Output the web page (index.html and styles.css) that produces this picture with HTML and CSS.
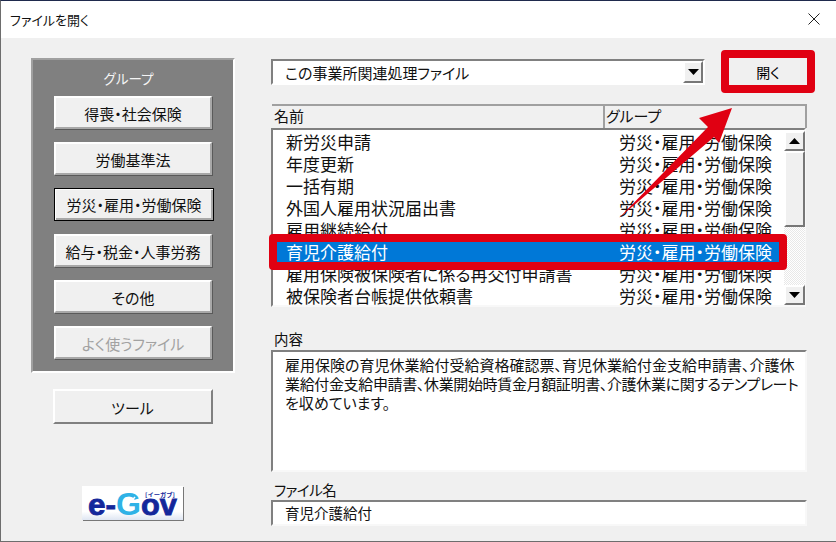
FILE: index.html
```html
<!DOCTYPE html>
<html lang="ja">
<head>
<meta charset="utf-8">
<title>ファイルを開く</title>
<link rel="stylesheet" href="styles.css">
</head>
<body>
<div class="window">
  <header class="titlebar">
    <span class="title">ファイルを開く</span>
    <svg class="close" width="12" height="12" viewBox="0 0 12 12"><path d="M.5.5l11 11M11.5.5l-11 11" stroke="#222" stroke-width="1" fill="none"/></svg>
  </header>
  <main class="content">
    <aside class="side">
      <section class="panel">
        <div class="panel-title">グループ</div>
        <div class="btn-stack">
          <div class="btn">得喪・社会保険</div>
          <div class="btn">労働基準法</div>
          <div class="btn btn-active">労災・雇用・労働保険</div>
          <div class="btn">給与・税金・人事労務</div>
          <div class="btn">その他</div>
          <div class="btn btn-disabled">よく使うファイル</div>
        </div>
      </section>
      <div class="btn btn-tool">ツール</div>
      <div class="logo">
        <svg width="101" height="34" viewBox="0 0 101 34">
          <defs>
            <linearGradient id="logobg" x1="0" y1="0" x2="0" y2="1">
              <stop offset="0" stop-color="#fff"/><stop offset=".75" stop-color="#fff"/><stop offset="1" stop-color="#dfe6f2"/>
            </linearGradient>
          </defs>
          <rect width="101" height="34" fill="url(#logobg)"/>
          <text class="logo-e" x="6" y="29" textLength="28" lengthAdjust="spacingAndGlyphs">e-</text>
          <text class="logo-g" x="34" y="29" textLength="25" lengthAdjust="spacingAndGlyphs">G</text>
          <path d="M42 23l11-12" stroke="#fff" stroke-width="1.500" fill="none"/>
          <text class="logo-e" x="59" y="29" textLength="36" lengthAdjust="spacingAndGlyphs">ov</text>
          <text class="logo-kana" x="63" y="11" textLength="30" lengthAdjust="spacingAndGlyphs">[イーガブ]</text>
        </svg>
      </div>
    </aside>
    <section class="main">
      <div class="top-row">
        <div class="combo">
          <span>この事業所関連処理ファイル</span>
          <span class="combo-arrow"><svg width="11" height="6" viewBox="0 0 11 6"><path d="M0 0h11L5.500 6z" fill="#000"/></svg></span>
        </div>
        <div class="open-btn">開く</div>
      </div>
      <div class="list-head">
        <div class="head-name">名前</div>
        <div class="head-group">グループ</div>
      </div>
      <div class="list">
        <div class="rows">
          <div class="row"><span class="cell-name">新労災申請</span><span>労災・雇用・労働保険</span></div>
          <div class="row"><span class="cell-name">年度更新</span><span>労災・雇用・労働保険</span></div>
          <div class="row"><span class="cell-name">一括有期</span><span>労災・雇用・労働保険</span></div>
          <div class="row"><span class="cell-name">外国人雇用状況届出書</span><span>労災・雇用・労働保険</span></div>
          <div class="row"><span class="cell-name">雇用継続給付</span><span>労災・雇用・労働保険</span></div>
          <div class="row row-selected"><span class="cell-name">育児介護給付</span><span>労災・雇用・労働保険</span></div>
          <div class="row"><span class="cell-name">雇用保険被保険者に係る再交付申請書</span><span>労災・雇用・労働保険</span></div>
          <div class="row"><span class="cell-name">被保険者台帳提供依頼書</span><span>労災・雇用・労働保険</span></div>
        </div>
        <div class="scrollbar">
          <div class="sb-btn"><svg width="11" height="6" viewBox="0 0 11 6"><path d="M0 6h11L5.500 0z" fill="#000"/></svg></div>
          <div class="sb-thumb"></div>
          <div class="sb-track"></div>
          <div class="sb-btn"><svg width="11" height="6" viewBox="0 0 11 6"><path d="M0 0h11L5.500 6z" fill="#000"/></svg></div>
        </div>
      </div>
      <div class="field-label label-desc">内容</div>
      <div class="desc">
        <div>雇用保険の育児休業給付受給資格確認票、育児休業給付金支給申請書、介護休</div>
        <div class="desc-tight">業給付金支給申請書、休業開始時賃金月額証明書、介護休業に関するテンプレート</div>
        <div>を収めています。</div>
      </div>
      <div class="field-label label-file">ファイル名</div>
      <div class="file-input">育児介護給付</div>
    </section>
  </main>
  <svg class="arrow" width="836" height="542" viewBox="0 0 836 542"><path d="M732 108L699 118 708 127 619 218 714 137 719 143z" fill="#e00012"/></svg>
</div>
</body>
</html>
```
FILE: styles.css
```css
* { box-sizing: border-box; }
html, body { margin: 0; padding: 0; }
body {
  width: 836px;
  height: 542px;
  overflow: hidden;
  background: #f0f0f0;
  font-family: "Noto Sans CJK JP", "Noto Sans", sans-serif;
  font-feature-settings: "palt";
  color: #000;
}
.window {
  position: relative;
  width: 836px;
  height: 542px;
  background: #f0f0f0;
  border-top: 1px solid #1f2a4d;
  border-left: 1px solid #6d6d6d;
  border-bottom: 1px solid #6d6d6d;
  display: flex;
  flex-direction: column;
}
.titlebar {
  height: 37px;
  flex: none;
  background: #fff;
  display: flex;
  align-items: center;
  justify-content: space-between;
  padding: 0 16px 0 9px;
}
.title { font-size: 13px; color: #111; }
.close { margin-top: -1px; }
.content { display: flex; padding: 20px 0 0 30px; flex: 1; }
.side { width: 204px; flex: none; display: flex; flex-direction: column; align-items: center; }
.panel {
  width: 204px;
  height: 315px;
  background: #808080;
  border: 2px solid;
  border-color: #a0a0a0 #fff #fff #a0a0a0;
  padding-left: 21px;
}
.panel-title {
  height: 36px;
  width: 158px;
  padding-right: 9px;
  color: #f4f4f4;
  font-size: 13.500px;
  text-align: center;
  line-height: 37px;
}
.btn-stack { display: flex; flex-direction: column; gap: 13px; }
.btn {
  width: 158px;
  height: 33px;
  background: #f0f0f0;
  border: 2px solid;
  border-color: #fff #a8a8a8 #a8a8a8 #fff;
  box-shadow: 1px 1px 0 #5a5a5a;
  display: flex;
  align-items: center;
  justify-content: center;
  padding-top: 1px;
  font-size: 15px;
  color: #111;
}
.btn-active {
  border: 1px solid #000;
  box-shadow: inset 1px 1px 0 #fff, inset -2px -2px 0 #a8a8a8;
  width: 160px;
  padding-top: 0;
}
.btn-disabled { color: #a2a2a2; }
.btn-tool {
  width: 160px;
  height: 35px;
  margin-top: 16px;
  margin-right: 1px;
  border-color: #fff #808080 #808080 #fff;
  box-shadow: 0 0 0 #6a6a6a;
}
.logo { margin-top: 62px; height: 34px; margin-right: 1px; box-shadow: 1px 1px 0 #777; }
.logo svg { display: block; overflow: visible; }
.logo-e { font: 900 29px "Liberation Sans", sans-serif; fill: #14279b; stroke: #14279b; stroke-width: .8px; }
.logo-g { font: 900 31px "Liberation Sans", sans-serif; fill: #2fb2e6; }
.logo-kana { font: 700 5.500px "Noto Sans CJK JP", sans-serif; fill: #14279b; }
.main { width: 536px; flex: none; margin-left: 36px; }
.top-row { display: flex; justify-content: space-between; height: 27px; margin-bottom: 19px; }
.combo {
  width: 434px;
  height: 26px;
  margin-top: 1px;
  background: #fff;
  border: 2px solid;
  border-color: #808080 #fff #fff #808080;
  display: flex;
  align-items: center;
  justify-content: space-between;
  padding-left: 12px;
  font-size: 15px;
  color: #111;
}
.combo-arrow {
  width: 20px;
  height: 22px;
  background: #f0f0f0;
  border: 2px solid;
  border-color: #fff #777 #777 #fff;
  display: flex;
  align-items: center;
  justify-content: center;
}
.open-btn {
  position: relative;
  width: 78px;
  height: 27px;
  background: #f0f0f0;
  display: flex;
  align-items: center;
  justify-content: center;
  font-size: 14px;
}
.open-btn::after {
  content: "";
  position: absolute;
  inset: -8px;
  border: 8px solid #e00012;
  border-radius: 4px;
}
.list-head {
  display: flex;
  height: 24px;
  margin-left: 1px;
  font-size: 15px;
  color: #111;
  border-top: 2px solid #a0a0a0;
  border-right: 2px solid #a0a0a0;
}
.head-name { width: 333px; padding-left: 2px; border-right: 2px solid #a0a0a0; line-height: 20px; }
.head-group { padding-left: 1px; line-height: 20px; }
.list {
  display: flex;
  width: 535px;
  height: 179px;
  background: #fff;
  border: 2px solid;
  border-color: #808080 #f8f8f8 #f8f8f8 #808080;
  padding-top: 1px;
}
.rows { width: 506px; flex: none; margin-right: 5px; }
.row {
  position: relative;
  height: 22px;
  display: flex;
  align-items: center;
  font-size: 17px;
  color: #111;
  line-height: 22px;
}
.cell-name { width: 346px; padding-left: 13px; }
.row-selected { background: #0078d7; color: #fff; }
.row-selected::after {
  content: "";
  position: absolute;
  z-index: 2;
  left: -4px;
  right: -8px;
  top: -7px;
  bottom: -7px;
  border: 8px solid #e00012;
  border-radius: 4px;
}
.scrollbar { width: 21px; flex: none; display: flex; flex-direction: column; height: 174px; }
.sb-btn {
  height: 20px;
  flex: none;
  background: #f0f0f0;
  border: 2px solid;
  border-color: #fff #777 #777 #fff;
  display: flex;
  align-items: center;
  justify-content: center;
}
.sb-thumb {
  height: 76px;
  flex: none;
  background: #f0f0f0;
  border: 2px solid;
  border-color: #fff #777 #777 #fff;
}
.sb-track {
  flex: 1;
  background-color: #fff;
  background-image: repeating-conic-gradient(#e8e8e8 0 25%, #fff 0 50%);
  background-size: 2px 2px;
}
.field-label { padding-left: 3px; font-size: 14.500px; color: #111; }
.label-desc { margin-top: 23px; height: 20px; line-height: 18px; }
.label-file { margin-top: 9px; height: 19px; line-height: 18px; letter-spacing: -.5px; }
.desc {
  width: 536px;
  height: 122px;
  background: #fff;
  border: 2px solid;
  border-color: #808080 #f8f8f8 #f8f8f8 #808080;
  padding: 3px 0 0 12px;
  font-size: 15px;
  line-height: 19px;
  color: #111;
  white-space: nowrap;
}
.desc-tight { letter-spacing: -.35px; }
.file-input {
  width: 536px;
  height: 26px;
  background: #fff;
  border: 2px solid;
  border-color: #808080 #f8f8f8 #f8f8f8 #808080;
  padding-left: 12px;
  font-size: 14.500px;
  line-height: 22px;
  color: #111;
}
.arrow { position: absolute; left: -1px; top: -1px; z-index: 3; pointer-events: none; }
```
